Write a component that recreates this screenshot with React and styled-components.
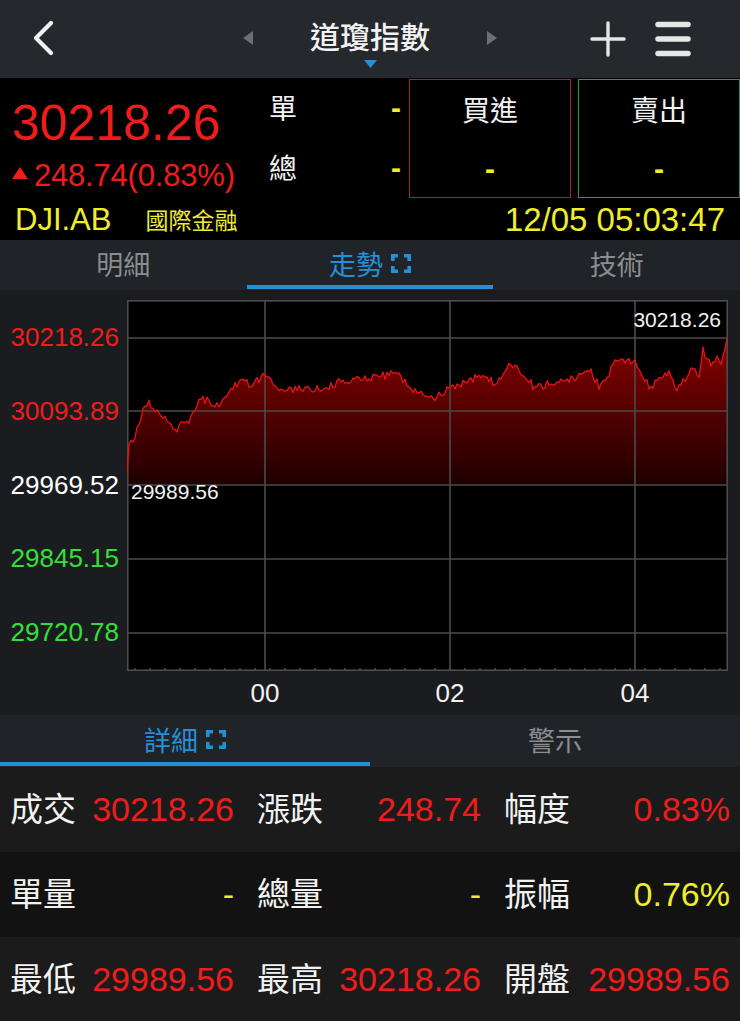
import React from "react";
import styled, { createGlobalStyle } from "styled-components";

const RED = "#f01c1c";
const GREEN = "#33e03a";
const YELLOW = "#eeee2a";
const BLUE = "#2390d8";
const FONT = `"Liberation Sans", Arial, "Noto Sans CJK TC", sans-serif`;
const CJK = `"Noto Sans CJK TC", "Liberation Sans", sans-serif`;

const GlobalStyle = createGlobalStyle`
  body {
    margin: 0;
    background: #000;
    font-family: ${FONT};
  }
`;

// price path keypoints in plot coordinates (600 x 370)
const keys = [
  [0, 173], [1, 145], [8, 138], [18, 102], [25, 105], [33, 115], [41, 120],
  [48, 130], [58, 122], [65, 118], [73, 97], [83, 102], [88, 107], [96, 100],
  [103, 92], [116, 76], [123, 85], [138, 76], [153, 92], [173, 88], [188, 90],
  [203, 86], [218, 80], [243, 77], [253, 77], [268, 72], [283, 88], [298, 95],
  [308, 97], [323, 88], [333, 85], [353, 75], [368, 83], [383, 63], [393, 70],
  [408, 88], [433, 80], [448, 78], [463, 70], [473, 88], [488, 63], [508, 60],
  [523, 88], [543, 72], [550, 90], [563, 70], [573, 75], [575, 48], [583, 65],
  [590, 57], [595, 65], [600, 38],
];

const rand = (i) => {
  const s = Math.sin(i * 12.9898 + 78.233) * 43758.5453;
  return s - Math.floor(s);
};

const buildPoints = () => {
  const pts = [];
  let k = 0;
  for (let x = 0; x <= 600; x += 2) {
    while (k < keys.length - 2 && keys[k + 1][0] < x) k++;
    const [x0, y0] = keys[k];
    const [x1, y1] = keys[k + 1];
    const t = x1 === x0 ? 0 : (x - x0) / (x1 - x0);
    let y = y0 + (y1 - y0) * Math.min(1, Math.max(0, t));
    if (x > 2 && x < 598) y += (rand(x) - 0.5) * 8;
    pts.push([x, Math.round(y * 10) / 10]);
  }
  return pts;
};

const points = buildPoints();
const linePath = points.map(([x, y], i) => `${i ? "L" : "M"}${x} ${y}`).join(" ");
const areaPath = `${linePath} L600 185 L0 185 Z`;

const yLabels = [
  { v: "30218.26", c: RED },
  { v: "30093.89", c: RED },
  { v: "29969.52", c: "#ffffff" },
  { v: "29845.15", c: GREEN },
  { v: "29720.78", c: GREEN },
];

const xLabels = [
  { v: "00", x: 138 },
  { v: "02", x: 323 },
  { v: "04", x: 508 },
];

const rows = [
  [
    { l: "成交", v: "30218.26", c: RED },
    { l: "漲跌", v: "248.74", c: RED },
    { l: "幅度", v: "0.83%", c: RED },
  ],
  [
    { l: "單量", v: "-", c: YELLOW },
    { l: "總量", v: "-", c: YELLOW },
    { l: "振幅", v: "0.76%", c: YELLOW },
  ],
  [
    { l: "最低", v: "29989.56", c: RED },
    { l: "最高", v: "30218.26", c: RED },
    { l: "開盤", v: "29989.56", c: RED },
  ],
];

const ExpandIcon = () => (
  <svg width="20" height="19" viewBox="0 0 20 19">
    <g fill="none" stroke={BLUE} strokeWidth="3.6">
      <path d="M1.8 7V1.8H7" />
      <path d="M13 1.8h5.2V7" />
      <path d="M18.2 12v5.2H13" />
      <path d="M7 17.2H1.8V12" />
    </g>
  </svg>
);

export default function App() {
  return (
    <Page>
      <GlobalStyle />
      <NavBar>
        <NavLeft>
          <svg width="24" height="36" viewBox="0 0 24 36">
            <path d="M20 3L5 18l15 15" fill="none" stroke="#f2f2f2" strokeWidth="4.2" strokeLinecap="round" strokeLinejoin="round" />
          </svg>
        </NavLeft>
        <NavCenter>
          <svg width="10" height="14" viewBox="0 0 10 14">
            <path d="M10 0v14L0 7z" fill="#6c7075" />
          </svg>
          <TitleBlock>
            <Title>道瓊指數</Title>
            <svg width="13" height="8" viewBox="0 0 13 8">
              <path d="M0 0h13L6.5 8z" fill={BLUE} />
            </svg>
          </TitleBlock>
          <svg width="10" height="14" viewBox="0 0 10 14">
            <path d="M0 0v14l10-7z" fill="#6c7075" />
          </svg>
        </NavCenter>
        <NavRight>
          <svg width="36" height="36" viewBox="0 0 36 36">
            <g stroke="#e6e6e6" strokeWidth="3.4" strokeLinecap="round">
              <path d="M18 2v32" />
              <path d="M2 18h32" />
            </g>
          </svg>
          <svg width="36" height="36" viewBox="0 0 36 36">
            <g stroke="#e6e6e6" strokeWidth="5.5" strokeLinecap="round">
              <path d="M3 3.5h30" />
              <path d="M3 18h30" />
              <path d="M3 32.5h30" />
            </g>
          </svg>
        </NavRight>
      </NavBar>

      <Quote>
        <QuoteTop>
          <PriceBlock>
            <Price>30218.26</Price>
            <Change>
              <svg width="16" height="12" viewBox="0 0 16 12">
                <path d="M8 0l8 12H0z" fill={RED} />
              </svg>
              248.74(0.83%)
            </Change>
          </PriceBlock>
          <VolBlock>
            <VolRow>
              <VolLabel>單</VolLabel>
              <Dash>-</Dash>
            </VolRow>
            <VolRow>
              <VolLabel>總</VolLabel>
              <Dash>-</Dash>
            </VolRow>
          </VolBlock>
          <OrderBox $border="#9a2a2a">
            <OrderLabel>買進</OrderLabel>
            <Dash>-</Dash>
          </OrderBox>
          <OrderBox $border="#2f9a3b">
            <OrderLabel>賣出</OrderLabel>
            <Dash>-</Dash>
          </OrderBox>
        </QuoteTop>
        <QuoteBottom>
          <Symbol>DJI.AB</Symbol>
          <Market>國際金融</Market>
          <Stamp>12/05 05:03:47</Stamp>
        </QuoteBottom>
      </Quote>

      <TabBar $cols={3}>
        <Tab>明細</Tab>
        <Tab $active>
          走勢
          <ExpandIcon />
        </Tab>
        <Tab>技術</Tab>
      </TabBar>

      <ChartPanel>
        <ChartRow>
          <YAxis>
            {yLabels.map((l) => (
              <YLabel key={l.v} $color={l.c}>
                {l.v}
              </YLabel>
            ))}
          </YAxis>
          <Plot width="601" height="371" viewBox="0 0 601 371">
            <defs>
              <linearGradient id="fill" x1="0" y1="40" x2="0" y2="185" gradientUnits="userSpaceOnUse">
                <stop offset="0" stopColor="#860000" />
                <stop offset="1" stopColor="#200000" />
              </linearGradient>
            </defs>
            <path d={areaPath} fill="url(#fill)" />
            <g stroke="#4b4b4b" strokeWidth="1.6" fill="none">
              {[38, 111, 185, 259, 333].map((y) => (
                <path key={y} d={`M0 ${y}H600`} />
              ))}
              {[138, 323, 508].map((x) => (
                <path key={x} d={`M${x} 0V370`} />
              ))}
              <rect x="0.8" y="0.8" width="599.4" height="369.4" />
              {Array.from({ length: 40 }, (_, i) => (
                <path key={i} d={`M${i * 15 + 8} 370v-2`} />
              ))}
            </g>
            <path d={linePath} fill="none" stroke="#e41414" strokeWidth="1.3" strokeLinejoin="round" />
            <PlotText x="594" y="27" textAnchor="end">30218.26</PlotText>
            <PlotText x="4" y="199">29989.56</PlotText>
          </Plot>
        </ChartRow>
        <XAxis>
          {xLabels.map((l) => (
            <XLabel key={l.v} style={{ left: l.x }}>
              {l.v}
            </XLabel>
          ))}
        </XAxis>
      </ChartPanel>

      <TabBar $cols={2} $height={52}>
        <Tab $active>
          詳細
          <ExpandIcon />
        </Tab>
        <Tab>警示</Tab>
      </TabBar>

      <Table>
        {rows.map((row, i) => (
          <Row key={i} $alt={i % 2 === 1}>
            {row.map((cell) => (
              <Cell key={cell.l}>
                <CellLabel>{cell.l}</CellLabel>
                <CellValue $color={cell.c}>{cell.v}</CellValue>
              </Cell>
            ))}
          </Row>
        ))}
      </Table>
    </Page>
  );
}

const Page = styled.div`
  width: 740px;
  height: 1021px;
  overflow: hidden;
  background: #000;
`;

const NavBar = styled.header`
  height: 78px;
  background: #25282c;
  display: grid;
  grid-template-columns: 1fr auto 1fr;
  align-items: center;
`;

const NavLeft = styled.div`
  display: flex;
  align-items: center;
  padding-left: 31px;
  padding-bottom: 2px;
`;

const NavCenter = styled.div`
  width: 254px;
  display: flex;
  align-items: center;
  justify-content: space-between;
  padding-bottom: 3px;
`;

const TitleBlock = styled.div`
  display: flex;
  flex-direction: column;
  align-items: center;
  padding-top: 8px;
`;

const Title = styled.div`
  font-family: ${CJK};
  font-size: 30px;
  font-weight: 500;
  line-height: 40px;
  color: #f2f2f2;
  margin-bottom: 5px;
`;

const NavRight = styled.div`
  display: flex;
  align-items: center;
  justify-content: flex-end;
  gap: 29px;
  padding-right: 49px;
  padding-bottom: 1px;
`;

const Quote = styled.section`
  background: #000;
  height: 162px;
`;

const QuoteTop = styled.div`
  display: flex;
  height: 120px;
`;

const PriceBlock = styled.div`
  width: 262px;
  padding-left: 12px;
  box-sizing: border-box;
  display: flex;
  flex-direction: column;
`;

const Price = styled.div`
  font-size: 50px;
  line-height: 60px;
  margin-top: 15px;
  color: ${RED};
`;

const Change = styled.div`
  display: flex;
  align-items: center;
  gap: 6px;
  font-size: 31px;
  line-height: 34px;
  margin-top: 6px;
  color: ${RED};
  letter-spacing: -0.2px;
  svg {
    margin-top: -6px;
  }
`;

const VolBlock = styled.div`
  width: 147px;
  padding: 0 8px 0 7px;
  box-sizing: border-box;
  display: flex;
  flex-direction: column;
`;

const VolRow = styled.div`
  height: 60px;
  display: flex;
  align-items: center;
  justify-content: space-between;
`;

const VolLabel = styled.span`
  font-family: ${CJK};
  font-size: 28px;
  color: #f2f2f2;
  margin-top: -2px;
`;

const Dash = styled.span`
  font-size: 30px;
  font-weight: bold;
  color: ${YELLOW};
`;

const OrderBox = styled.div`
  width: 162px;
  height: 119px;
  margin-top: 1px;
  margin-right: 7px;
  box-sizing: border-box;
  border: 1.5px solid ${(p) => p.$border};
  display: flex;
  flex-direction: column;
  align-items: center;
  justify-content: space-between;
  padding: 9px 0 11px;
  &:last-child {
    margin-right: 0;
  }
`;

const OrderLabel = styled.span`
  font-family: ${CJK};
  font-size: 28px;
  line-height: 40px;
  color: #f2f2f2;
`;

const QuoteBottom = styled.div`
  height: 42px;
  display: flex;
  align-items: center;
  padding: 0 15px 0 15px;
  color: ${YELLOW};
`;

const Symbol = styled.span`
  font-size: 31px;
  margin-top: 2px;
`;

const Market = styled.span`
  font-family: ${CJK};
  font-size: 23px;
  margin-left: 34px;
`;

const Stamp = styled.span`
  margin-left: auto;
  font-size: 33px;
  margin-top: 2px;
`;

const TabBar = styled.nav`
  height: ${(p) => p.$height || 50}px;
  background: #202327;
  display: grid;
  grid-template-columns: repeat(${(p) => p.$cols}, 1fr);
`;

const Tab = styled.div`
  display: flex;
  align-items: center;
  justify-content: center;
  gap: 8px;
  font-family: ${CJK};
  font-size: 27px;
  color: ${(p) => (p.$active ? BLUE : "#8b8d90")};
  box-sizing: border-box;
  border-bottom: 4px solid ${(p) => (p.$active ? BLUE : "transparent")};
  padding-top: 2px;
  margin-bottom: 1px;
`;

const ChartPanel = styled.section`
  height: 425px;
  background: #1b1c1f;
  box-sizing: border-box;
  padding-top: 10px;
`;

const ChartRow = styled.div`
  display: flex;
`;

const YAxis = styled.div`
  width: 127px;
  padding-top: 1px;
  display: flex;
  flex-direction: column;
`;

const YLabel = styled.div`
  height: 73.8px;
  line-height: 73.8px;
  text-align: right;
  padding-right: 8px;
  font-size: 26px;
  color: ${(p) => p.$color};
`;

const Plot = styled.svg`
  display: block;
  background: #000;
`;

const PlotText = styled.text`
  font-family: ${FONT};
  font-size: 21px;
  fill: #f2f2f2;
`;

const XAxis = styled.div`
  position: relative;
  margin-left: 127px;
  width: 600px;
  height: 44px;
`;

const XLabel = styled.span`
  position: absolute;
  top: 8px;
  transform: translateX(-50%);
  font-size: 26px;
  line-height: 28px;
  color: #f2f2f2;
`;

const Table = styled.section`
  display: flex;
  flex-direction: column;
`;

const Row = styled.div`
  height: 85px;
  display: grid;
  grid-template-columns: 247px 247px 246px;
  background: ${(p) => (p.$alt ? "#121212" : "#1b1b1b")};
`;

const Cell = styled.div`
  display: flex;
  align-items: center;
  justify-content: space-between;
  padding: 0 13px 0 10px;
  &:last-child {
    padding-right: 10px;
  }
`;

const CellLabel = styled.span`
  font-family: ${CJK};
  font-size: 33px;
  color: #f2f2f2;
  margin-top: -6px;
`;

const CellValue = styled.span`
  font-size: 34px;
  color: ${(p) => p.$color};
`;
